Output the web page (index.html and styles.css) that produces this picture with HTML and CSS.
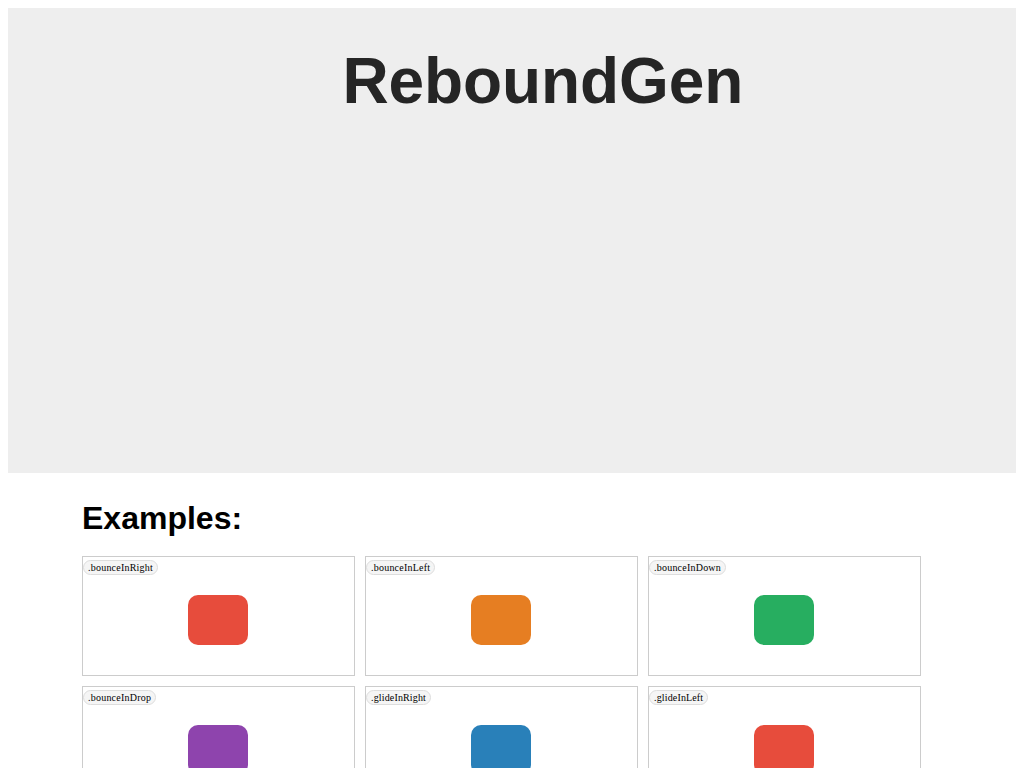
FILE: index.html
```html
<!DOCTYPE html>
<html lang="en">
<head>
<meta charset="utf-8">
<title>ReboundGen</title>
<link rel="stylesheet" href="styles.css">
</head>
<body>
<header class="hero"><h1 class="title">ReboundGen</h1></header>
<main class="examples">
<h2 class="heading">Examples:</h2>
<div class="grid">
<div class="card"><span class="label">.bounceInRight</span><div class="box red"></div></div>
<div class="card"><span class="label">.bounceInLeft</span><div class="box orange"></div></div>
<div class="card"><span class="label">.bounceInDown</span><div class="box green"></div></div>
<div class="card"><span class="label">.bounceInDrop</span><div class="box purple"></div></div>
<div class="card"><span class="label glide">.glideInRight</span><div class="box blue"></div></div>
<div class="card"><span class="label glide">.glideInLeft</span><div class="box red"></div></div>
</div>
</main>
</body>
</html>
```
FILE: styles.css
```css
html {
  height: 100%;
  overflow: hidden;
}
body {
  margin: 8px;
  background: #fff;
  font-family: "Liberation Serif", serif;
}
.hero {
  box-sizing: border-box;
  height: 465px;
  padding: 37px 0 0 334.5px;
  background: #eee;
}
.title {
  margin: 0;
  color: #252525;
  font: bold 64px/73px "Liberation Sans", sans-serif;
  letter-spacing: -0.1px;
}
.examples {
  padding: 27px 0 0 74px;
}
.heading {
  margin: 0 0 19px;
  color: #000;
  font: bold 32px/37px "Liberation Sans", sans-serif;
}
.grid {
  display: grid;
  grid-template-columns: repeat(3, 273px);
  gap: 10px;
}
.card {
  box-sizing: border-box;
  height: 120px;
  border: 1px solid #ccc;
  display: flex;
  flex-direction: column;
  align-items: flex-start;
}
.label {
  box-sizing: border-box;
  height: 15px;
  margin-top: 3px;
  padding: 0 4px;
  border: 1px solid #ddd;
  border-radius: 8px;
  background: #f5f5f5;
  color: #000;
  font-size: 10px;
  line-height: 13px;
  letter-spacing: 0.22px;
}
.glide {
  letter-spacing: 0.15px;
}
.box {
  width: 60px;
  height: 50px;
  margin: 20px 0 0 105px;
  border-radius: 10px;
}
.red { background: #e74c3c; }
.orange { background: #e67e22; }
.green { background: #27ae60; }
.purple { background: #8e44ad; }
.blue { background: #2980b9; }
```
